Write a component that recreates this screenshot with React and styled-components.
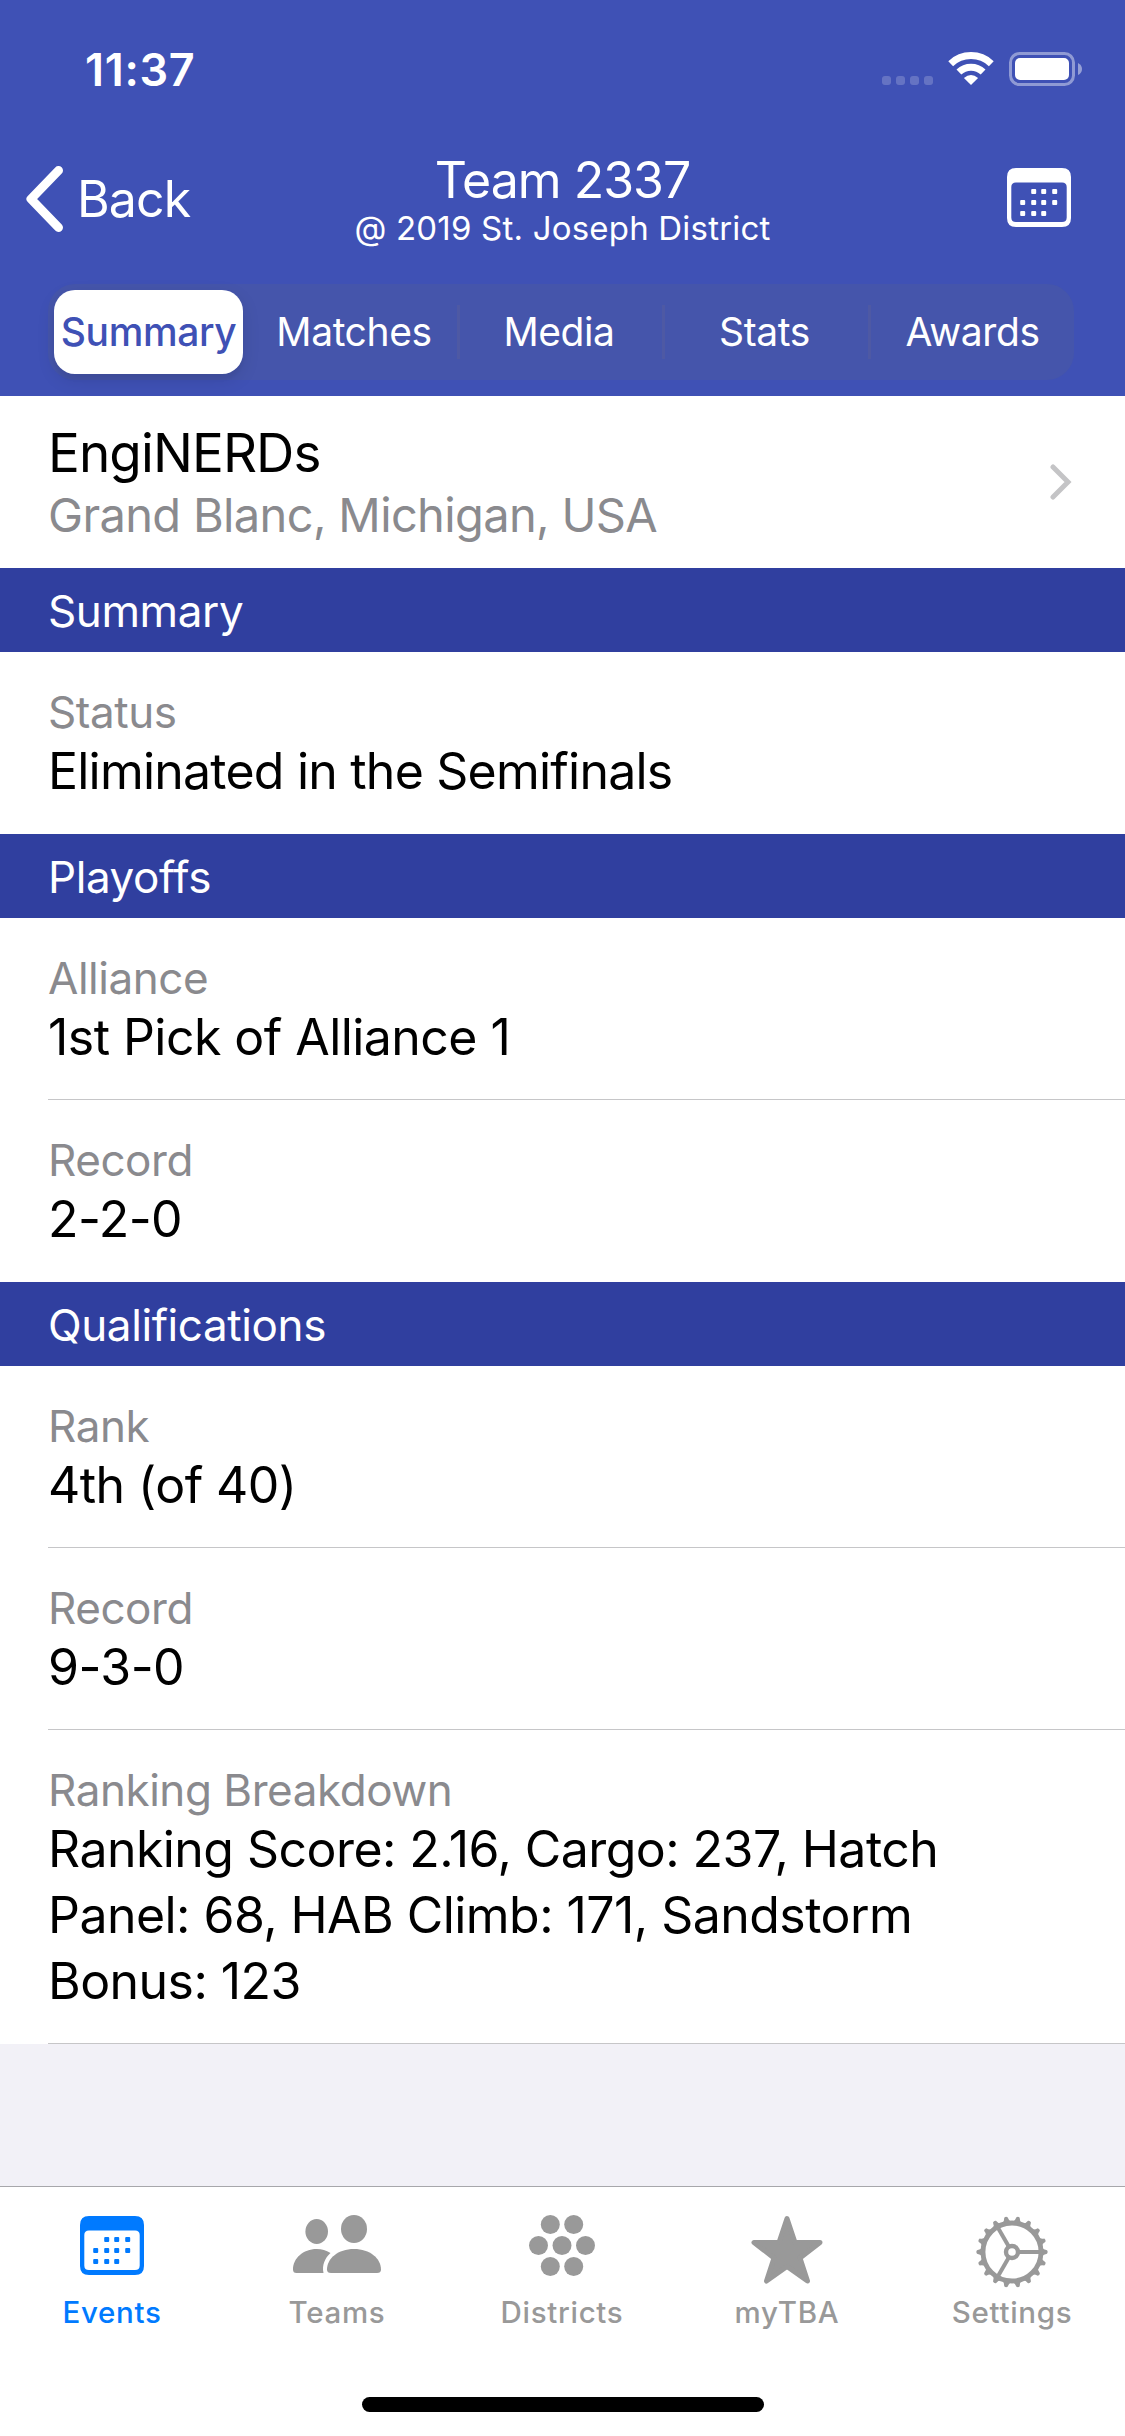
import React from "react";
import styled, { createGlobalStyle, css } from "styled-components";

const Global = createGlobalStyle`
  * { box-sizing: border-box; }
  body { margin: 0; background: #fff; }
`;

const Screen = styled.div`
  width: 1125px;
  height: 2436px;
  display: flex;
  flex-direction: column;
  background: #f2f1f7;
  font-family: Inter, "Liberation Sans", sans-serif;
  color: #000;
  overflow: hidden;
`;

const Header = styled.header`
  height: 396px;
  flex: none;
  display: flex;
  flex-direction: column;
  background: #3f51b5;
  color: #fff;
`;

const StatusBar = styled.div`
  height: 132px;
  display: flex;
  justify-content: space-between;
  align-items: flex-start;
  padding: 52px 43px 0 85px;
`;

const StatusIcons = styled.div`
  display: flex;
  height: 40px;
`;

const Label = styled.span`
  display: block;
  white-space: nowrap;
  font-size: ${(p) => p.$size}px;
  line-height: ${(p) => p.$line}px;
  letter-spacing: ${(p) => p.$track || 0}px;
  font-weight: ${(p) => p.$weight || 400};
  color: ${(p) => p.$color || "inherit"};
`;

const NavBar = styled.nav`
  height: 132px;
  display: grid;
  grid-template-columns: 300px 1fr 300px;
  align-items: center;
`;

const BackButton = styled.div`
  display: flex;
  align-items: center;
  gap: 13px;
  padding: 1px 0 0 26px;
`;

const TitleBlock = styled.div`
  display: flex;
  flex-direction: column;
  align-items: center;
  padding-top: 4px;
`;

const NavAction = styled.div`
  display: flex;
  justify-content: flex-end;
  padding-right: 54px;
`;

const Segments = styled.div`
  height: 96px;
  margin: 20px 51px 0 48px;
  display: grid;
  grid-template-columns: 203px 206px 205px 206px 206px;
  align-items: center;
  border-radius: 27px;
  background: #4555ab;
`;

const Segment = styled.div`
  height: 54px;
  display: flex;
  align-items: center;
  justify-content: center;
  ${(p) =>
    p.$divided &&
    css`
      border-left: 3px solid #4e59a4;
      padding-right: 4px;

      &:last-child {
        padding-right: 0;
      }
    `}
  ${(p) =>
    p.$active &&
    css`
      height: 84px;
      width: 189px;
      margin-left: 6px;
      border-radius: 21px;
      background: #fff;
      color: #3f51b5;
      box-shadow: 0 6px 18px rgba(0, 0, 0, 0.1), 0 6px 3px rgba(0, 0, 0, 0.03);
    `}
`;

const TeamRow = styled.div`
  height: 172px;
  flex: none;
  display: flex;
  justify-content: space-between;
  align-items: center;
  padding: 0 53px 0 48px;
  background: #fff;
`;

const TeamText = styled.div`
  padding-top: 4px;
`;

const SectionHeader = styled.div`
  height: 84px;
  flex: none;
  display: flex;
  align-items: center;
  padding: 1px 0 0 48px;
  background: #303f9f;
  color: #fff;
`;

const Row = styled.div`
  flex: none;
  display: flex;
  padding-left: 48px;
  background: #fff;
`;

const RowBody = styled.div`
  flex: 1;
  padding: 35px 60px 0 0;
  height: ${(p) => p.$height}px;
  border-bottom: ${(p) => (p.$line ? "1px solid #c6c6c8" : "0")};
`;

const Value = styled.div`
  margin-top: 1px;
  font-size: 50px;
  line-height: 66px;
  letter-spacing: ${(p) => p.$track}px;
  white-space: pre-line;
`;

const TabBar = styled.footer`
  margin-top: auto;
  height: 250px;
  flex: none;
  display: flex;
  flex-direction: column;
  align-items: center;
  justify-content: space-between;
  padding-bottom: 24px;
  border-top: 1px solid #a7a7ab;
  background: #fff;
`;

const Tabs = styled.div`
  width: 100%;
  display: grid;
  grid-template-columns: repeat(5, 225px);
`;

const Tab = styled.div`
  display: flex;
  flex-direction: column;
  align-items: center;
  padding-top: 28px;
  padding-right: 1px;
  color: ${(p) => (p.$active ? "#007aff" : "#999")};
`;

const TabIcon = styled.div`
  height: 78px;
  display: flex;
  align-items: flex-start;
`;

const HomeIndicator = styled.div`
  width: 402px;
  height: 15px;
  border-radius: 8px;
  background: #000;
`;

function CalendarIcon() {
  const dots = [
    [25, 22], [35, 22], [46, 22],
    [14, 33], [25, 33], [35, 33], [46, 33],
    [14, 44], [25, 44], [35, 44],
  ];
  return (
    <svg width="64" height="62" viewBox="0 0 64 62" fill="currentColor">
      <path
        fillRule="evenodd"
        d="M9 1H55Q64 1 64 10V51Q64 60 55 60H9Q0 60 0 51V10Q0 1 9 1ZM9 15.5Q4.300 15.5 4.300 20V50.500Q4.300 55 9 55H55Q59.700 55 59.700 50.500V20Q59.700 15.500 55 15.500Z"
      />
      {dots.map(([x, y]) => (
        <rect key={x + "-" + y} x={x - 0.8} y={y} width="5" height="5" rx="1" />
      ))}
    </svg>
  );
}

function TeamsIcon() {
  return (
    <svg width="88" height="62" viewBox="0 0 88 62" fill="currentColor">
      <ellipse cx="23.700" cy="16.500" rx="11.300" ry="12.500" />
      <ellipse cx="61" cy="14" rx="13" ry="14" />
      <path d="M37.500 38C33 35.300 29 34 23.700 34C10 34 0 43.500 0 54.500Q0 58 3.500 58H30.500C28.800 50 32 43 37.500 38Z" />
      <path d="M61 34C77 34 88 43.500 88 54.500Q88 58 84 58H38Q34 58 34 54.500C34 43.500 45 34 61 34Z" />
    </svg>
  );
}

function DistrictsIcon() {
  const dots = [[21.300, 9.500], [44.700, 9.500], [9.500, 30.500], [33, 30.500], [56.500, 30.500], [21.300, 51.500], [44.700, 51.500]];
  return (
    <svg width="66" height="62" viewBox="0 0 66 62" fill="currentColor">
      {dots.map(([x, y]) => (
        <circle key={x + "-" + y} cx={x} cy={y} r="9.500" />
      ))}
    </svg>
  );
}

function StarIcon() {
  return (
    <svg width="72" height="70" viewBox="0 0 72 70" fill="currentColor" stroke="currentColor" strokeWidth="5" strokeLinejoin="round">
      <path d="M36 3.500L44 27.500H69L49 43L56.500 66L36 51.500L15.500 66L23 43L3 27.500H28Z" />
    </svg>
  );
}

function GearIcon() {
  const teeth = Array.from({ length: 18 }, (_, i) => i * 20);
  return (
    <svg width="72" height="74" viewBox="-36 -37 72 74" fill="none" stroke="currentColor">
      <circle r="29" strokeWidth="4.800" />
      <circle r="6" strokeWidth="4.400" />
      {[0, 120, 240].map((a) => (
        <path key={a} d="M7 0H29" strokeWidth="4" transform={`rotate(${a})`} />
      ))}
      {teeth.map((a) => (
        <path key={a} d="M30 -4.500Q31.500 -2.200 35 -1.700Q36.300 0 35 1.700Q31.500 2.200 30 4.500Z" fill="currentColor" stroke="none" transform={`rotate(${a})`} />
      ))}
    </svg>
  );
}

function SignalIcons() {
  return (
    <svg width="202" height="40" viewBox="880 52 202 40" fill="none">
      {[882, 896, 910, 924].map((x) => (
        <rect key={x} x={x} y="76" width="9" height="9" rx="3" fill="#fff" opacity=".2" />
      ))}
      <g stroke="#fff" strokeWidth="7">
        <path d="M950.700 63.700A29.500 29.500 0 0 1 991.300 63.700" />
        <path d="M958.900 72A17.600 17.600 0 0 1 983.100 72" />
      </g>
      <path d="M971 85L963.900 78Q971 72 978.100 78Z" fill="#fff" />
      <rect x="1010.500" y="53.500" width="63" height="31" rx="9" stroke="#fff" strokeWidth="3" opacity=".42" />
      <rect x="1015" y="58" width="54" height="22" rx="5" fill="#fff" />
      <path d="M1078 63Q1082 65 1082 69Q1082 73 1078 75Z" fill="#fff" opacity=".45" />
    </svg>
  );
}

const segments = ["Summary", "Matches", "Media", "Stats", "Awards"];

const sections = [
  { title: "Summary", rows: [{ label: "Status", value: "Eliminated in the Semifinals", track: -0.78 }] },
  {
    title: "Playoffs",
    rows: [
      { label: "Alliance", value: "1st Pick of Alliance 1" },
      { label: "Record", value: "2-2-0" },
    ],
  },
  {
    title: "Qualifications",
    closed: true,
    rows: [
      { label: "Rank", value: "4th (of 40)" },
      { label: "Record", value: "9-3-0" },
      {
        label: "Ranking Breakdown",
        value: "Ranking Score: 2.16, Cargo: 237, Hatch\nPanel: 68, HAB Climb: 171, Sandstorm\nBonus: 123",
        height: 314,
      },
    ],
  },
];

const tabs = [
  ["Events", CalendarIcon],
  ["Teams", TeamsIcon],
  ["Districts", DistrictsIcon],
  ["myTBA", StarIcon],
  ["Settings", GearIcon],
];

export default function App() {
  return (
    <>
      <Global />
      <Screen>
        <Header>
          <StatusBar>
            <Label $size={45} $line={36} $track={0.7} $weight={600}>11:37</Label>
            <StatusIcons><SignalIcons /></StatusIcons>
          </StatusBar>
          <NavBar>
            <BackButton>
              <svg width="38" height="68" viewBox="0 -2 38 68" fill="none" stroke="#fff" strokeWidth="9" strokeLinecap="round" strokeLinejoin="round">
                <path d="M32.500 3.500L5 32L32.500 60.500" />
              </svg>
              <Label $size={50} $line={64} $track={-0.9}>Back</Label>
            </BackButton>
            <TitleBlock>
              <Label $size={50} $line={56} $track={-1}>Team 2337</Label>
              <Label $size={33} $line={40} $track={0.2}>@ 2019 St. Joseph District</Label>
            </TitleBlock>
            <NavAction><CalendarIcon /></NavAction>
          </NavBar>
          <Segments>
            {segments.map((name, i) => (
              <Segment key={name} $active={i === 0} $divided={i > 1}>
                <Label $size={39} $line={50} $track={-0.4} $weight={i === 0 ? 500 : 400}>{name}</Label>
              </Segment>
            ))}
          </Segments>
        </Header>
        <TeamRow>
          <TeamText>
            <Label $size={53} $line={62} $track={-0.9}>EngiNERDs</Label>
            <Label $size={47} $line={62} $track={-0.65} $color="#8a8a8e">Grand Blanc, Michigan, USA</Label>
          </TeamText>
          <svg width="22" height="38" viewBox="0 0 22 38" fill="none" stroke="#c4c4c6" strokeWidth="5" strokeLinecap="round">
            <path d="M3 4L18 19L3 34" />
          </svg>
        </TeamRow>
        {sections.map((section) => (
          <React.Fragment key={section.title}>
            <SectionHeader><Label $size={44} $line={56} $track={-0.4}>{section.title}</Label></SectionHeader>
            {section.rows.map((row, i) => (
              <Row key={row.label}>
                <RowBody $height={row.height || 182} $line={section.closed || i < section.rows.length - 1}>
                  <Label $size={44} $line={50} $track={-0.45} $color="#8a8a8e">{row.label}</Label>
                  <Value $track={row.track || -0.55}>{row.value}</Value>
                </RowBody>
              </Row>
            ))}
          </React.Fragment>
        ))}
        <TabBar>
          <Tabs>
            {tabs.map(([name, Icon], i) => (
              <Tab key={name} $active={i === 0}>
                <TabIcon><Icon /></TabIcon>
                <Label $size={29.5} $line={38} $track={0.7} $weight={500}>{name}</Label>
              </Tab>
            ))}
          </Tabs>
          <HomeIndicator />
        </TabBar>
      </Screen>
    </>
  );
}
